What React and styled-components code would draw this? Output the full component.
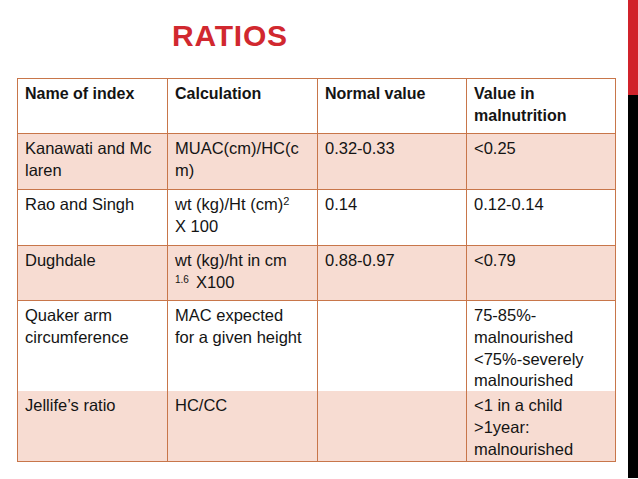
import React from "react";
import styled, { createGlobalStyle } from "styled-components";

const Global = createGlobalStyle`
  html, body { margin: 0; padding: 0; background: #ffffff; }
  body { font-family: "Liberation Sans", Arial, sans-serif; }
`;

const Page = styled.div`
  width: 638px;
  height: 479px;
  display: flex;
  overflow: hidden;
  background: #ffffff;
`;

const Main = styled.div`
  flex: 0 0 628px;
  box-sizing: border-box;
  padding: 21px 0 0 17px;
  display: flex;
  flex-direction: column;
`;

const Title = styled.h1`
  margin: 0 0 0 155px;
  font-family: "Liberation Sans", Arial, sans-serif;
  font-weight: 700;
  font-size: 30px;
  line-height: 30px;
  height: 30px;
  color: #d1282f;
  letter-spacing: 0.8px;
`;

const Table = styled.div`
  margin-top: 27px;
  width: 599px;
  box-sizing: border-box;
  padding: 1px;
  background: #c8764a;
  display: flex;
  flex-direction: column;
  gap: 1px;
`;

const Row = styled.div`
  display: grid;
  grid-template-columns: 149px 149px 148px 148px;
  gap: 1px;
  height: ${(p) => p.$h}px;
`;

const Cell = styled.div`
  background: ${(p) => (p.$shade ? "#f7dcd2" : "#ffffff")};
  padding: 4px 4px 0 7px;
  font-size: ${(p) => (p.$head ? 16 : 16.5)}px;
  line-height: 21.8px;
  color: #141414;
  font-weight: ${(p) => (p.$head ? 700 : 400)};
  word-break: break-word;
`;

const Sup = styled.sup`
  font-size: 11px;
  line-height: 0;
  vertical-align: 5px;
`;

const SmallSup = styled.span`
  font-size: 10px;
  vertical-align: 5px;
  line-height: 0;
  margin-right: 7px;
`;

const SideBar = styled.div`
  flex: 0 0 10px;
  display: flex;
  flex-direction: column;
`;

const RedBlock = styled.div`
  height: 95px;
  background: #d1232b;
`;

const BlackBlock = styled.div`
  height: 383px;
  background: #000000;
`;

const rows = [
  {
    h: 54,
    head: true,
    cells: ["Name of index", "Calculation", "Normal value", <>Value in<br />malnutrition</>],
  },
  {
    h: 55,
    shade: true,
    cells: [<>Kanawati and Mc<br />laren</>, <>MUAC(cm)/HC(c<br />m)</>, "0.32-0.33", "<0.25"],
  },
  {
    h: 55,
    cells: ["Rao and Singh", <>wt (kg)/Ht (cm)<Sup>2</Sup><br />X 100</>, "0.14", "0.12-0.14"],
  },
  {
    h: 54,
    shade: true,
    cells: ["Dughdale", <>wt (kg)/ht in cm<br /><SmallSup>1.6</SmallSup>X100</>, "0.88-0.97", "<0.79"],
  },
  {
    h: 89,
    cells: [
      <>Quaker arm<br />circumference</>,
      <>MAC expected<br />for a given height</>,
      "",
      <>75-85%-<br />malnourished<br />&lt;75%-severely<br />malnourished</>,
    ],
  },
  {
    h: 70,
    shade: true,
    cells: ["Jellife’s ratio", "HC/CC", "", <>&lt;1 in a child<br />&gt;1year:<br />malnourished</>],
  },
];

export default function App() {
  return (
    <>
      <Global />
      <Page>
        <Main>
          <Title>RATIOS</Title>
          <Table>
            {rows.map((r, i) => (
              <Row key={i} $h={r.h}>
                {r.cells.map((c, j) => (
                  <Cell key={j} $shade={r.shade} $head={r.head}>
                    {c}
                  </Cell>
                ))}
              </Row>
            ))}
          </Table>
        </Main>
        <SideBar>
          <RedBlock />
          <BlackBlock />
        </SideBar>
      </Page>
    </>
  );
}
